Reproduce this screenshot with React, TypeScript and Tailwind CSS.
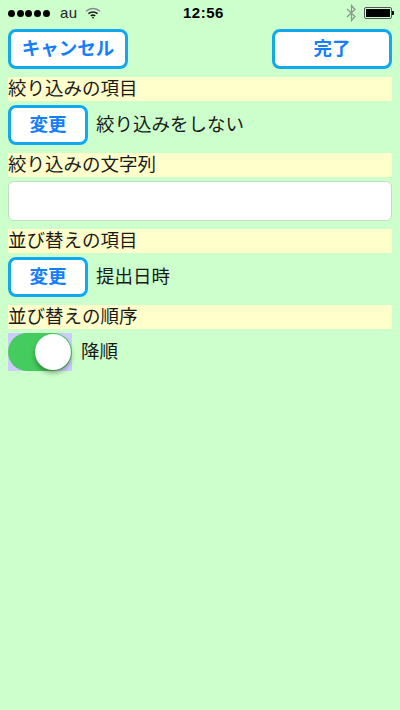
import React from 'react';

const FONT = '"Liberation Sans", "Noto Sans CJK JP", sans-serif';

function ActionButton({ label, width }: { label: string; width: string }) {
  return (
    <button className={`${width} h-10 shrink-0 rounded-[8px] border-[3px] border-[#12a8f0] bg-white text-[18.5px] font-bold text-[#147efb]`}>
      {label}
    </button>
  );
}

function SectionLabel({ text }: { text: string }) {
  return <div className="flex h-6 items-center bg-[#ffffcc] text-[18.5px] leading-6 text-[#1a1a1a]">{text}</div>;
}

function ChangeRow({ value }: { value: string }) {
  return (
    <div className="flex items-center gap-2">
      <ActionButton label="変更" width="w-20" />
      <span className="text-[18.5px] text-[#1a1a1a]">{value}</span>
    </div>
  );
}

function StatusBar() {
  return (
    <div className="flex h-[26px] items-center pl-2 text-black">
      <div className="flex w-[43px] gap-[1.7px]">
        {[0, 1, 2, 3, 4].map(i => (
          <span key={i} className="h-[7px] w-[7px] rounded-full bg-black" />
        ))}
      </div>
      <span className="ml-[9px] w-[16px] text-[15px] tracking-[0.5px] text-[#222]">au</span>
      <svg className="ml-[9px]" width="16" height="12" viewBox="0 0 16 12" fill="none" stroke="#555" strokeWidth="1.5">
        <path d="M1 4.2C5 0.6 11 0.6 15 4.2" stroke="#889" />
        <path d="M3.4 6.6C6 4.3 10 4.3 12.6 6.6" stroke="#222" />
        <path d="M5.8 9C7 8 9 8 10.2 9" stroke="#111" />
        <circle cx="8" cy="10.6" r="0.9" fill="#111" stroke="none" />
      </svg>
      <span className="ml-[82px] w-[56px] text-[15px] font-bold tracking-[0.5px]">12:56</span>
      <svg className="ml-[107px]" width="11" height="18" viewBox="0 0 11 18" fill="none" stroke="#8a9a8a" strokeWidth="1.3">
        <path d="M1 5L9 12.5L5.5 16.5V1.5L9 5.5L1 13" />
      </svg>
      <div className="ml-[7px] flex items-center">
        <div className="h-[12px] w-[28px] rounded-[2px] border border-[#555] p-[1px]">
          <div className="h-full w-full bg-black" />
        </div>
        <div className="h-[4px] w-[2px] rounded-r-[1px] bg-black" />
      </div>
    </div>
  );
}

export default function App() {
  return (
    <div className="h-[710px] w-[400px] overflow-hidden bg-[#ccffcc]" style={{ fontFamily: FONT }}>
      <StatusBar />
      <div className="flex flex-col px-2 pt-[3px]">
        <div className="flex justify-between">
          <ActionButton label="キャンセル" width="w-[120px]" />
          <ActionButton label="完了" width="w-[120px]" />
        </div>
        <div className="mt-2 flex flex-col gap-1">
          <SectionLabel text="絞り込みの項目" />
          <ChangeRow value="絞り込みをしない" />
        </div>
        <div className="mt-2 flex flex-col gap-1">
          <SectionLabel text="絞り込みの文字列" />
          <div className="h-10 rounded-[6px] border border-[#c4dcc4] bg-white" />
        </div>
        <div className="mt-2 flex flex-col gap-1">
          <SectionLabel text="並び替えの項目" />
          <ChangeRow value="提出日時" />
        </div>
        <div className="mt-2 flex flex-col gap-1">
          <SectionLabel text="並び替えの順序" />
          <div className="flex items-center gap-[9px]">
            <div className="h-[38px] w-16 bg-[#ccccff]">
              <div className="flex h-full w-full items-center justify-end rounded-full bg-[#45cc5e] pr-[1px]">
                <div className="h-9 w-9 rounded-full bg-white shadow-[0_3px_5px_rgba(0,0,0,0.35)]" />
              </div>
            </div>
            <span className="text-[18.5px] text-[#1a1a1a]">降順</span>
          </div>
        </div>
      </div>
    </div>
  );
}
